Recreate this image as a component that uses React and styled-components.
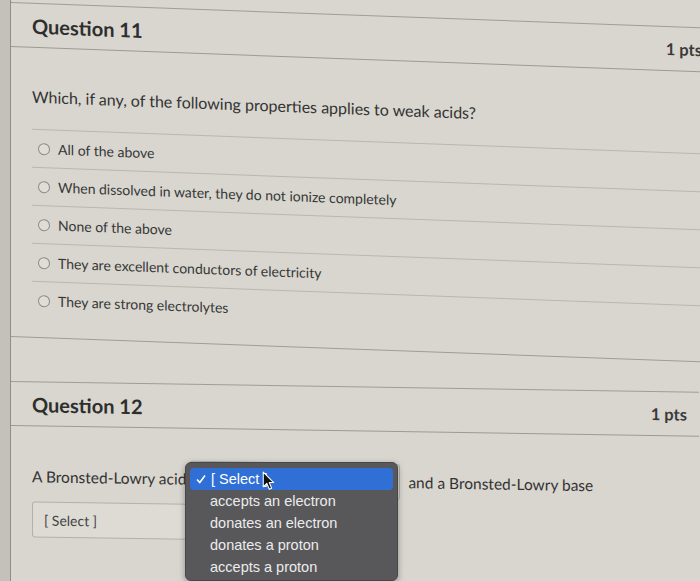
import styled, { createGlobalStyle } from "styled-components";

const GlobalStyle = createGlobalStyle`
  html, body {
    margin: 0;
    padding: 0;
    background: #d8d6cf;
  }
  * {
    box-sizing: border-box;
  }
`;

const Page = styled.div`
  position: relative;
  display: flex;
  width: 700px;
  height: 581px;
  overflow: hidden;
  background: #d8d6cf;
  font-family: Lato, "Open Sans", sans-serif;
  color: #363636;
`;

const Rail = styled.div`
  flex: none;
  width: 11px;
  background: #c3c1ba;
  border-right: 1.5px solid #8f8d87;
`;

const Main = styled.div`
  flex: 1;
  min-width: 0;
  padding-top: 2px;
`;

const Card = styled.section`
  width: ${(p) => p.$width}px;
  margin-bottom: ${(p) => p.$gap || 0}px;
  border-top: 1px solid #9f9d97;
  border-bottom: 1px solid #9f9d97;
  transform: skewY(${(p) => p.$skew}deg);
  transform-origin: 0 0;
`;

const Header = styled.header`
  display: flex;
  align-items: center;
  justify-content: space-between;
  height: 44px;
  padding: 1px 12px 0 21px;
  border-bottom: 1.5px solid #9c9a94;
`;

const Title = styled.h2`
  margin: 0;
  font-size: 20px;
  font-weight: 700;
  color: #2e2e2e;
`;

const Points = styled.span`
  font-size: 16.5px;
  font-weight: 700;
  color: #3a3a3a;
`;

const Body = styled.div`
  padding: ${(p) => p.$top}px 0 ${(p) => p.$bottom}px 21px;
`;

const Prompt = styled.p`
  margin: 0;
  font-size: 16px;
  line-height: 24px;
  color: #333;
`;

const Options = styled.ul`
  list-style: none;
  margin: 20px 0 0;
  padding: 0;
`;

const Option = styled.li`
  display: flex;
  align-items: center;
  gap: 8px;
  height: 38px;
  padding-left: 6px;
  border-top: 1px solid #b9b7b0;
  font-size: 14px;
  color: #363636;
`;

const Radio = styled.span`
  flex: none;
  width: 12px;
  height: 12px;
  border-radius: 50%;
  border: 1.5px solid #8a8a88;
  background: #dfddd6;
`;

const Sentence = styled.div`
  display: flex;
  flex-wrap: wrap;
  align-items: center;
  font-size: 15.5px;
  color: #333;
`;

const Words = styled.span`
  margin-right: ${(p) => p.$gap || 0}px;
`;

const SelectBox = styled.div`
  display: flex;
  align-items: center;
  width: 210px;
  height: 36px;
  margin: ${(p) => p.$top || 0}px 8px 0 0;
  padding-left: 11px;
  border: 1px solid #b3b1aa;
  border-radius: 3px;
  background: #dddbd4;
  font-size: 14px;
  color: #444;
`;

const Break = styled.div`
  flex-basis: 100%;
  height: 0;
`;

/* native popup list opened over the first blank */
const Menu = styled.ul`
  position: absolute;
  left: 185px;
  top: 462px;
  width: 213px;
  margin: 0;
  padding: 5px 4px 2px;
  list-style: none;
  background: #58585b;
  border: 1px solid #47474a;
  border-radius: 6px;
  box-shadow: 0 2px 6px rgba(0, 0, 0, 0.35);
  font-family: "Liberation Sans", Arial, sans-serif;
  font-size: 14.5px;
  color: #ececec;
`;

const MenuItem = styled.li`
  position: relative;
  display: flex;
  align-items: center;
  height: 22px;
  padding-left: ${(p) => (p.$active ? 6 : 20)}px;
  border-radius: 4px;
  background: ${(p) => (p.$active ? "#2f6fd6" : "transparent")};
  color: ${(p) => (p.$active ? "#fff" : "#ececec")};
`;

const Check = styled.svg`
  width: 10px;
  height: 10px;
  margin-right: 5px;
`;

const Cursor = styled.svg`
  position: absolute;
  left: 72px;
  top: 3px;
  width: 13px;
  height: 20px;
`;

const options = [
  "All of the above",
  "When dissolved in water, they do not ionize completely",
  "None of the above",
  "They are excellent conductors of electricity",
  "They are strong electrolytes",
];

const choices = [
  "accepts an electron",
  "donates an electron",
  "donates a proton",
  "accepts a proton",
];

export default function App() {
  return (
    <>
      <GlobalStyle />
      <Page>
        <Rail />
        <Main>
          <Card $width={703} $skew={2.1} $gap={44}>
            <Header>
              <Title>Question 11</Title>
              <Points>1 pts</Points>
            </Header>
            <Body $top={37} $bottom={18}>
              <Prompt>Which, if any, of the following properties applies to weak acids?</Prompt>
              <Options>
                {options.map((text) => (
                  <Option key={text}>
                    <Radio />
                    {text}
                  </Option>
                ))}
              </Options>
            </Body>
          </Card>

          <Card $width={688} $skew={0.9}>
            <Header>
              <Title>Question 12</Title>
              <Points>1 pts</Points>
            </Header>
            <Body $top={32} $bottom={60}>
              <Sentence>
                <Words $gap={4}>A Bronsted-Lowry acid</Words>
                <SelectBox>[ Select ]</SelectBox>
                <Words>and a Bronsted-Lowry base</Words>
                <Break />
                <SelectBox $top={7}>[ Select ]</SelectBox>
              </Sentence>
            </Body>
          </Card>
        </Main>

        <Menu>
          <MenuItem $active>
            <Check viewBox="0 0 10 10">
              <polyline points="1,5.5 3.8,8.5 9,1.5" fill="none" stroke="#fff" strokeWidth="1.6" />
            </Check>
            [ Select ]
            <Cursor viewBox="0 0 12 19">
              <path
                d="M1 1 L1 15 L4.4 11.8 L6.8 17.4 L9 16.4 L6.7 11 L11 11 Z"
                fill="#111"
                stroke="#fff"
                strokeWidth="1"
                strokeLinejoin="round"
              />
            </Cursor>
          </MenuItem>
          {choices.map((c) => (
            <MenuItem key={c}>{c}</MenuItem>
          ))}
        </Menu>
      </Page>
    </>
  );
}
